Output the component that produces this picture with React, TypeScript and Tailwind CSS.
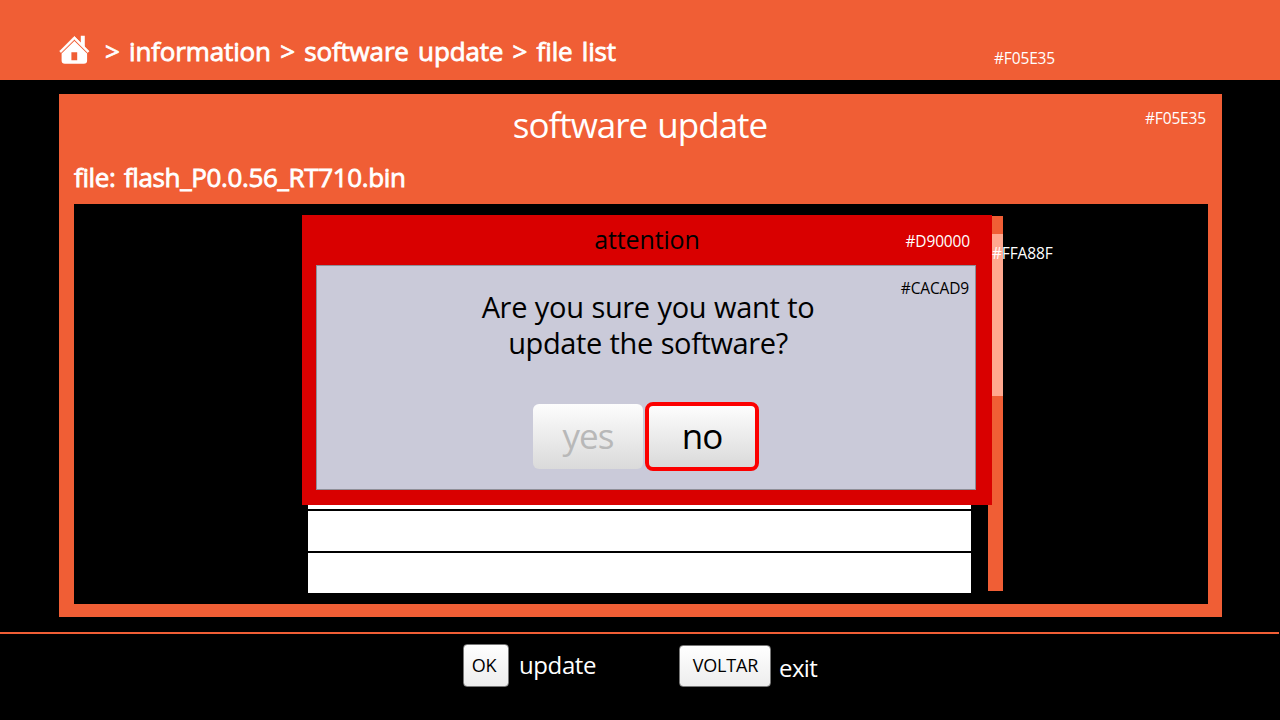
import React from "react";

function HomeIcon() {
  return (
    <svg className="h-[32px] w-[32px]" viewBox="0 0 32 32" fill="white">
      <path d="M21.8 2.8H25.8V14.4L21.8 10.4Z" />
      <path d="M0.7 18.2 15.4 3.4 30 18.2 28.7 19.4 15.4 6.2 2 19.4Z" stroke="white" strokeWidth="0.8" strokeLinejoin="round" />
      <path
        fillRule="evenodd"
        d="M15.4 7.9 28.1 20.4V27.4Q28.1 30.7 24.8 30.7H5.9Q2.6 30.7 2.6 27.4V20.4ZM12.4 19.2V27.2H18.2V19.2Z"
      />
    </svg>
  );
}

function ColorTag({ className, children }: { className: string; children: string }) {
  return (
    <span className={`absolute text-[15.5px] leading-5 tracking-[-0.15px] whitespace-nowrap ${className}`}>
      {children}
    </span>
  );
}

function Dialog() {
  return (
    <div className="absolute top-[11px] left-[228px] flex h-[290px] w-[690px] flex-col bg-[#d90000] pr-4 pb-[15px] pl-3.5 text-black">
      <h2 className="h-[50px] pt-2 pl-0.5 text-center text-[25px] leading-8 tracking-[-0.15px]">attention</h2>
      <ColorTag className="top-4 right-[22px] text-white">#D90000</ColorTag>
      <div className="relative flex flex-1 flex-col items-center border border-[#8f8f98] bg-[#cacad9]">
        <ColorTag className="top-3 right-1.5">#CACAD9</ColorTag>
        <p className="mt-[23px] ml-1 text-center text-[29px] leading-9 tracking-[-0.34px] [word-spacing:0.6px]">
          Are you sure you want to
          <br />
          <span className="tracking-[-0.38px]">update the software?</span>
        </p>
        <div className="mt-[41px] flex items-center gap-0.5">
          <button className="h-[65px] w-[110px] rounded-md bg-linear-to-b from-[#fdfdfd] to-[#dadada] pb-[3px] text-[35px] leading-none tracking-[-0.9px] text-[#b8b8b8]">
            yes
          </button>
          <button className="h-[69px] w-[114px] rounded-lg border-4 border-[#fc0000] bg-linear-to-b from-[#fdfdfd] to-[#dadada] pb-[3px] text-[35px] leading-none tracking-[-1px]">
            no
          </button>
        </div>
      </div>
    </div>
  );
}

export default function App() {
  return (
    <div className="flex h-[720px] w-[1280px] flex-col overflow-hidden bg-black font-['Open_Sans','Noto_Sans',sans-serif] text-white">
      <header className="relative flex h-20 shrink-0 bg-[#f05e35] pt-[33px] pl-[59px]">
        <HomeIcon />
        <h1 className="ml-3.5 text-[26px] leading-9 tracking-[-0.15px] whitespace-nowrap [-webkit-text-stroke:0.8px_white] [word-spacing:2.7px]">
          &gt; information &gt; software update &gt; file list
        </h1>
        <ColorTag className="top-12 left-[994px]">#F05E35</ColorTag>
      </header>

      <main className="relative mt-3.5 ml-[59px] flex h-[523px] w-[1163px] shrink-0 flex-col bg-[#f05e35] pr-3.5 pb-[13px] pl-[15px]">
        <h2 className="mt-[7px] -ml-0.5 text-center text-[35px] leading-[48px] tracking-[-1px] [word-spacing:2px]">software update</h2>
        <ColorTag className="top-3.5 right-4">#F05E35</ColorTag>
        <p className="mt-2.5 h-[45px] text-[26px] leading-9 tracking-[-0.36px] [-webkit-text-stroke:0.8px_white] [word-spacing:2px]">
          file: flash_P0.0.56_RT710.bin
        </p>
        <section className="relative flex flex-1 bg-black pt-3 pl-[234px]">
          <ul className="mt-px flex w-[663px] flex-col gap-0.5">
            {Array.from({ length: 9 }, (_, i) => (
              <li key={i} className="h-10 bg-white" />
            ))}
          </ul>
          <div className="ml-[17px] h-[375px] w-[15px] bg-[#f05e35] pt-[18px]">
            <div className="h-[162px] bg-[#ffa88f]" />
          </div>
          <Dialog />
          <ColorTag className="top-[39px] left-[918px]">#FFA88F</ColorTag>
        </section>
      </main>

      <footer className="mt-[15px] flex w-[1279px] flex-1 border-t-2 border-[#f05e35] pl-[463px]">
        <kbd className="mt-2.5 flex h-[43px] w-[46px] justify-center rounded-[4px] border border-[#777] bg-linear-to-b from-white to-[#ededed] pt-2 pr-1 font-['Open_Sans',sans-serif] text-[18px] leading-6 tracking-[-0.2px] text-black">
          OK
        </kbd>
        <span className="mt-[15px] ml-2.5 w-[78px] text-[24px] leading-8 tracking-[-0.4px]">update</span>
        <kbd className="mt-[11px] ml-[82px] flex h-[42px] w-[92px] justify-center rounded-[4px] border border-[#777] bg-linear-to-b from-white to-[#ededed] pt-[7px] pl-px font-['Open_Sans',sans-serif] text-[18px] leading-6 tracking-[-0.15px] text-black">
          VOLTAR
        </kbd>
        <span className="mt-[18px] ml-2 text-[24px] leading-8 tracking-[-0.6px]">exit</span>
      </footer>
    </div>
  );
}
